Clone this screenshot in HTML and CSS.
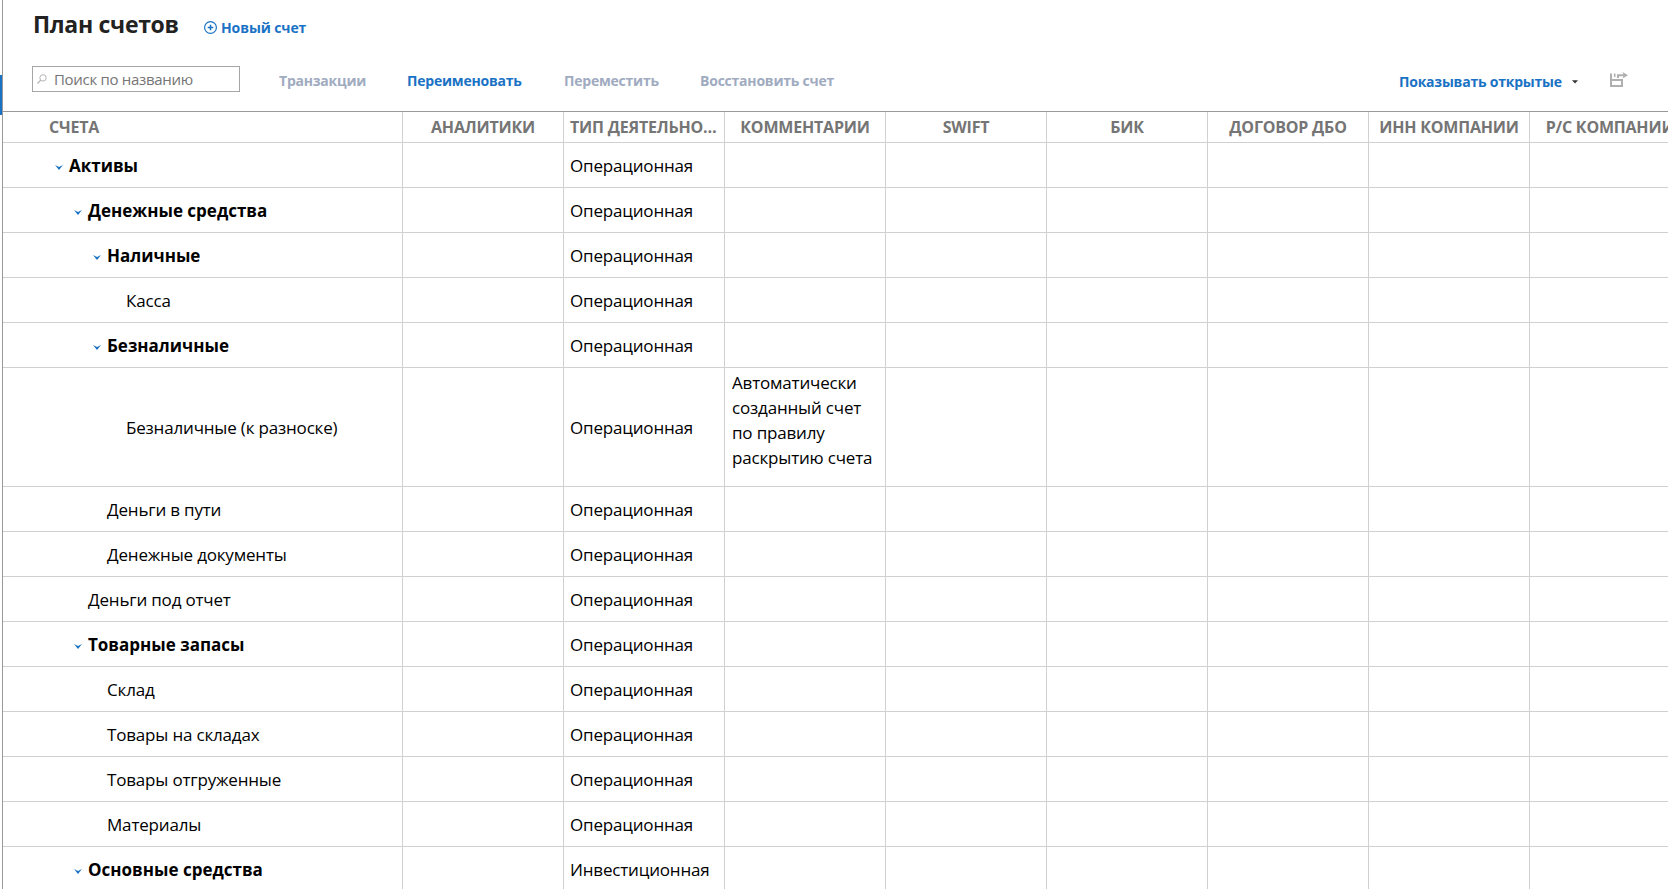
FILE: index.html
```html
<!DOCTYPE html>
<html lang="ru">
<head>
  <meta charset="UTF-8" />
  <meta name="viewport" content="width=device-width, initial-scale=1.0" />
  <title>План счетов</title>
  <link rel="stylesheet" href="styles.css">
</head>
<body>
  <!-- Edge of the side menu -->
  <aside class="side"><div class="side-active"></div></aside>

  <main class="page">
    <header class="top">
      <h1>План счетов</h1>
      <a class="new-account">
        <svg width="13" height="13" viewBox="0 0 13 13" fill="none" stroke="#1a72c4">
          <circle cx="6.5" cy="6.5" r="5.9" stroke-width="1.2"/>
          <path d="M6.5 3.7v5.6M3.7 6.5h5.6" stroke-width="1.5"/>
        </svg>
        <span>Новый счет</span>
      </a>
    </header>

    <div class="toolbar">
      <div class="search">
        <svg width="10" height="10" viewBox="0 0 10 10" fill="none" stroke="#b5b5b5">
          <circle cx="6" cy="3.9" r="3.2"/>
          <path d="M3.7 6.2L.4 9.5" stroke-width="1.3"/>
        </svg>
        <span>Поиск по названию</span>
      </div>
      <a class="action a1 disabled">Транзакции</a>
      <a class="action a2">Переименовать</a>
      <a class="action a3 disabled">Переместить</a>
      <a class="action a4 disabled">Восстановить счет</a>
      <a class="action filter">Показывать открытые</a>
      <svg class="caret" width="6" height="4" viewBox="0 0 6 4"><path d="M0 .3h6L3 3.6z" fill="#333"/></svg>
      <svg class="export" width="18" height="15" viewBox="0 0 18 15" fill="none" stroke="#b0b0b0" stroke-width="2">
        <path d="M1 1.5V14h11V8M1 8h12"/>
        <path d="M4.7 1.5v3.5" stroke-width="1.6"/>
        <path d="M8 6V3.3h6" stroke-width="2"/>
        <path d="M12.5 0l5.5 3.3-5.5 3.3 1.2-3.3z" fill="#b0b0b0" stroke="none"/>
      </svg>
    </div>

    <table class="accounts">
      <thead>
        <tr>
          <th class="name">СЧЕТА</th>
          <th>АНАЛИТИКИ</th>
          <th>ТИП ДЕЯТЕЛЬНОСТИ</th>
          <th>КОММЕНТАРИИ</th>
          <th>SWIFT</th>
          <th>БИК</th>
          <th>ДОГОВОР ДБО</th>
          <th>ИНН КОМПАНИИ</th>
          <th>Р/С КОМПАНИИ</th>
        </tr>
      </thead>
      <tbody>
        <tr class="group l1"><td><i class="arrow"></i>Активы</td><td></td><td>Операционная</td><td></td><td></td><td></td><td></td><td></td><td></td></tr>
        <tr class="group l2"><td><i class="arrow"></i>Денежные средства</td><td></td><td>Операционная</td><td></td><td></td><td></td><td></td><td></td><td></td></tr>
        <tr class="group l3"><td><i class="arrow"></i>Наличные</td><td></td><td>Операционная</td><td></td><td></td><td></td><td></td><td></td><td></td></tr>
        <tr class="l4"><td>Касса</td><td></td><td>Операционная</td><td></td><td></td><td></td><td></td><td></td><td></td></tr>
        <tr class="group l3"><td><i class="arrow"></i>Безналичные</td><td></td><td>Операционная</td><td></td><td></td><td></td><td></td><td></td><td></td></tr>
        <tr class="l4 tall"><td>Безналичные (к разноске)</td><td></td><td>Операционная</td><td class="comment">Автоматически<br>созданный счет<br>по правилу<br>раскрытию счета</td><td></td><td></td><td></td><td></td><td></td></tr>
        <tr class="l3"><td>Деньги в пути</td><td></td><td>Операционная</td><td></td><td></td><td></td><td></td><td></td><td></td></tr>
        <tr class="l3"><td>Денежные документы</td><td></td><td>Операционная</td><td></td><td></td><td></td><td></td><td></td><td></td></tr>
        <tr class="l2"><td>Деньги под отчет</td><td></td><td>Операционная</td><td></td><td></td><td></td><td></td><td></td><td></td></tr>
        <tr class="group l2"><td><i class="arrow"></i>Товарные запасы</td><td></td><td>Операционная</td><td></td><td></td><td></td><td></td><td></td><td></td></tr>
        <tr class="l3"><td>Склад</td><td></td><td>Операционная</td><td></td><td></td><td></td><td></td><td></td><td></td></tr>
        <tr class="l3"><td>Товары на складах</td><td></td><td>Операционная</td><td></td><td></td><td></td><td></td><td></td><td></td></tr>
        <tr class="l3"><td>Товары отгруженные</td><td></td><td>Операционная</td><td></td><td></td><td></td><td></td><td></td><td></td></tr>
        <tr class="l3"><td>Материалы</td><td></td><td>Операционная</td><td></td><td></td><td></td><td></td><td></td><td></td></tr>
        <tr class="group l2"><td><i class="arrow"></i>Основные средства</td><td></td><td>Инвестиционная</td><td></td><td></td><td></td><td></td><td></td><td></td></tr>
      </tbody>
    </table>
  </main>
</body>
</html>
```
FILE: styles.css
```css
* {
  box-sizing: border-box;
}

body {
  margin: 0;
  height: 889px;
  display: flex;
  overflow: hidden;
  background: #fff;
  color: #000;
  font-family: "Segoe UI", "Open Sans", "Noto Sans", sans-serif;
}

/* Side menu edge */
.side {
  flex: none;
  width: 3px;
  padding-top: 75px;
  border-right: 1px solid #999;
}

.side-active {
  height: 40px;
  background: #1a72c4;
}

.page {
  flex: 1;
  min-width: 0;
  overflow: hidden;
}

/* Title row */
.top {
  display: flex;
  align-items: center;
  height: 50px;
  padding-left: 30px;
}

h1 {
  margin: 0;
  width: 171px;
  padding-bottom: 2px;
  font-size: 23px;
  line-height: 48px;
  letter-spacing: -0.3px;
  color: #222;
  white-space: nowrap;
}

.new-account {
  display: flex;
  align-items: center;
  gap: 4px;
  padding-top: 4px;
  color: #1a72c4;
  font-size: 14px;
  font-weight: bold;
  letter-spacing: -0.1px;
  white-space: nowrap;
}

/* Search and actions */
.toolbar {
  display: flex;
  height: 61px;
  padding: 16px 0 0 29px;
}

.search {
  display: flex;
  width: 208px;
  height: 26px;
  padding-left: 4px;
  border: 1px solid #a6a6a6;
  color: #757575;
  font-size: 15px;
  line-height: 25px;
  letter-spacing: -0.3px;
  white-space: nowrap;
}

.search svg {
  margin: 7px 7px 0 0;
}

.action {
  color: #1a72c4;
  font-size: 14px;
  font-weight: bold;
  line-height: 29px;
  letter-spacing: -0.22px;
  white-space: nowrap;
}

.disabled {
  color: #a0abc0;
}

.a1 { width: 128px; margin-left: 39px; }
.a2 { width: 157px; }
.a3 { width: 136px; }

.filter {
  width: 173px;
  margin-left: auto;
  line-height: 31px;
}

.caret {
  margin: 14px 32px 0 0;
}

.export {
  margin: 6px 40px 0 0;
}

/* Accounts table */
.accounts {
  width: 1688px;
  table-layout: fixed;
  border-spacing: 0;
  border-top: 1px solid #999;
}

th,
td {
  padding: 0 6px;
  border-right: 1px solid #d0d0d0;
  border-bottom: 1px solid #d0d0d0;
}

th {
  width: 161px;
  height: 31px;
  color: #757575;
  font-size: 16px;
  line-height: 30px;
  letter-spacing: -0.2px;
  overflow: hidden;
  text-overflow: ellipsis;
  white-space: nowrap;
}

th.name {
  width: 400px;
  padding-left: 46px;
  text-align: left;
}

td {
  height: 45px;
  padding-top: 1px;
  font-size: 17px;
  line-height: 25px;
  letter-spacing: -0.18px;
  white-space: nowrap;
}

.group td:first-child {
  font-weight: bold;
  letter-spacing: 0;
}

/* Nesting levels */
.l1 td:first-child { padding-left: 66px; }
.l2 td:first-child { padding-left: 85px; }
.l3 td:first-child { padding-left: 104px; }
.l4 td:first-child { padding-left: 123px; }

.arrow {
  display: inline-block;
  width: 8px;
  height: 5px;
  margin: 0 6px 2px -14px;
  background: #1a72c4;
  clip-path: polygon(0 0, 50% 40%, 100% 0, 50% 100%);
}

.tall td { height: 119px; }

td.comment {
  padding: 2px 7px;
  vertical-align: top;
}
```
